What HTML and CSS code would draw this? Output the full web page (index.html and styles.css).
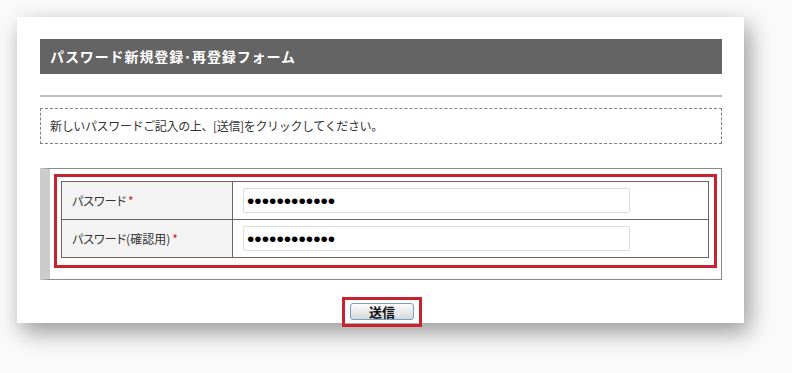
FILE: index.html
```html
<!DOCTYPE html>
<html lang="ja">
<head>
<meta charset="utf-8">
<link rel="stylesheet" href="styles.css">
</head>
<body>
<div class="card">
  <h1 class="title">パスワード新規登録･再登録フォーム</h1>
  <hr class="rule">
  <div class="notice">新しいパスワードご記入の上、[送信]をクリックしてください。</div>
  <div class="formbox">
    <div class="highlight">
      <table class="fields">
        <tr>
          <th>パスワード<span class="req">*</span></th>
          <td><input class="pw" type="password" value="abcdefghijkl"></td>
        </tr>
        <tr>
          <th>パスワード(確認用)<span class="req">*</span></th>
          <td><input class="pw" type="password" value="abcdefghijkl"></td>
        </tr>
      </table>
    </div>
  </div>
  <div class="actions">
    <div class="btnmark"><button class="send" type="button">送信</button></div>
  </div>
</div>
</body>
</html>
```
FILE: styles.css
```css
html, body {
  margin: 0;
  padding: 0;
}
body {
  background: #fafafa;
  font-family: "Noto Sans CJK JP", "Liberation Sans", sans-serif;
  color: #222;
  width: 792px;
  height: 373px;
  overflow: hidden;
}
.card {
  margin: 17px 0 0 17px;
  width: 727px;
  height: 306px;
  box-sizing: border-box;
  padding: 22px 22px 0 23px;
  background: #fff;
  box-shadow: 5px 9px 22px rgba(0, 0, 0, 0.4);
}
.title {
  margin: 0;
  height: 35px;
  background: #646464;
  color: #fff;
  font-size: 14px;
  font-weight: bold;
  line-height: 35px;
  padding-left: 10px;
  letter-spacing: 0.9px;
}
.rule {
  margin: 21px 0 0 0;
  border: 0;
  height: 2px;
  background: #bdbdbd;
}
.notice {
  margin-top: 11px;
  height: 36px;
  box-sizing: border-box;
  border: 1px dashed #808080;
  font-size: 12px;
  line-height: 34px;
  padding-left: 9px;
  letter-spacing: -0.35px;
  color: #333;
}
.formbox {
  margin-top: 24px;
  height: 112px;
  box-sizing: border-box;
  border: 1px solid #8a8a8a;
  border-left: 10px solid #cccccc;
  padding: 5px 4px 0 4px;
}
.highlight {
  border: 3px solid #c8222f;
  padding: 4px 5px 7px 4px;
}
.fields {
  width: 100%;
  border-collapse: collapse;
  border: 1px solid #666;
}
.fields th, .fields td {
  height: 37px;
  padding: 0;
  border: 1px solid #666;
}
.fields th {
  width: 160px;
  background: #f3f3f3;
  text-align: left;
  font-weight: normal;
  font-size: 12px;
  padding-left: 10px;
  color: #333;
  font-feature-settings: "palt";
}
.req {
  color: #c0242c;
  margin-left: 2px;
}
.fields td {
  padding-left: 10px;
}
.pw {
  display: block;
  width: 387px;
  height: 25px;
  box-sizing: border-box;
  border: 1px solid #dcdcdc;
  border-radius: 2px;
  padding: 0 3px;
  font-family: "Liberation Sans", sans-serif;
  font-size: 21px;
  letter-spacing: 0;
  color: #000;
  background: #fff;
  outline: none;
}
.actions {
  display: flex;
  justify-content: center;
  margin-top: 17px;
  padding-left: 2px;
}
.btnmark {
  border: 3px solid #c8222f;
  padding: 3px 5px 4px 5px;
  display: flex;
}
.send {
  width: 64px;
  height: 17px;
  padding: 0;
  border: 1px solid #6fa3c7;
  border-radius: 3px;
  background: linear-gradient(#fdfdfd, #e6e6e6 60%, #d8d8d8);
  font-family: "Noto Sans CJK JP", sans-serif;
  font-size: 13px;
  font-weight: bold;
  line-height: 15px;
  color: #111;
}
```
